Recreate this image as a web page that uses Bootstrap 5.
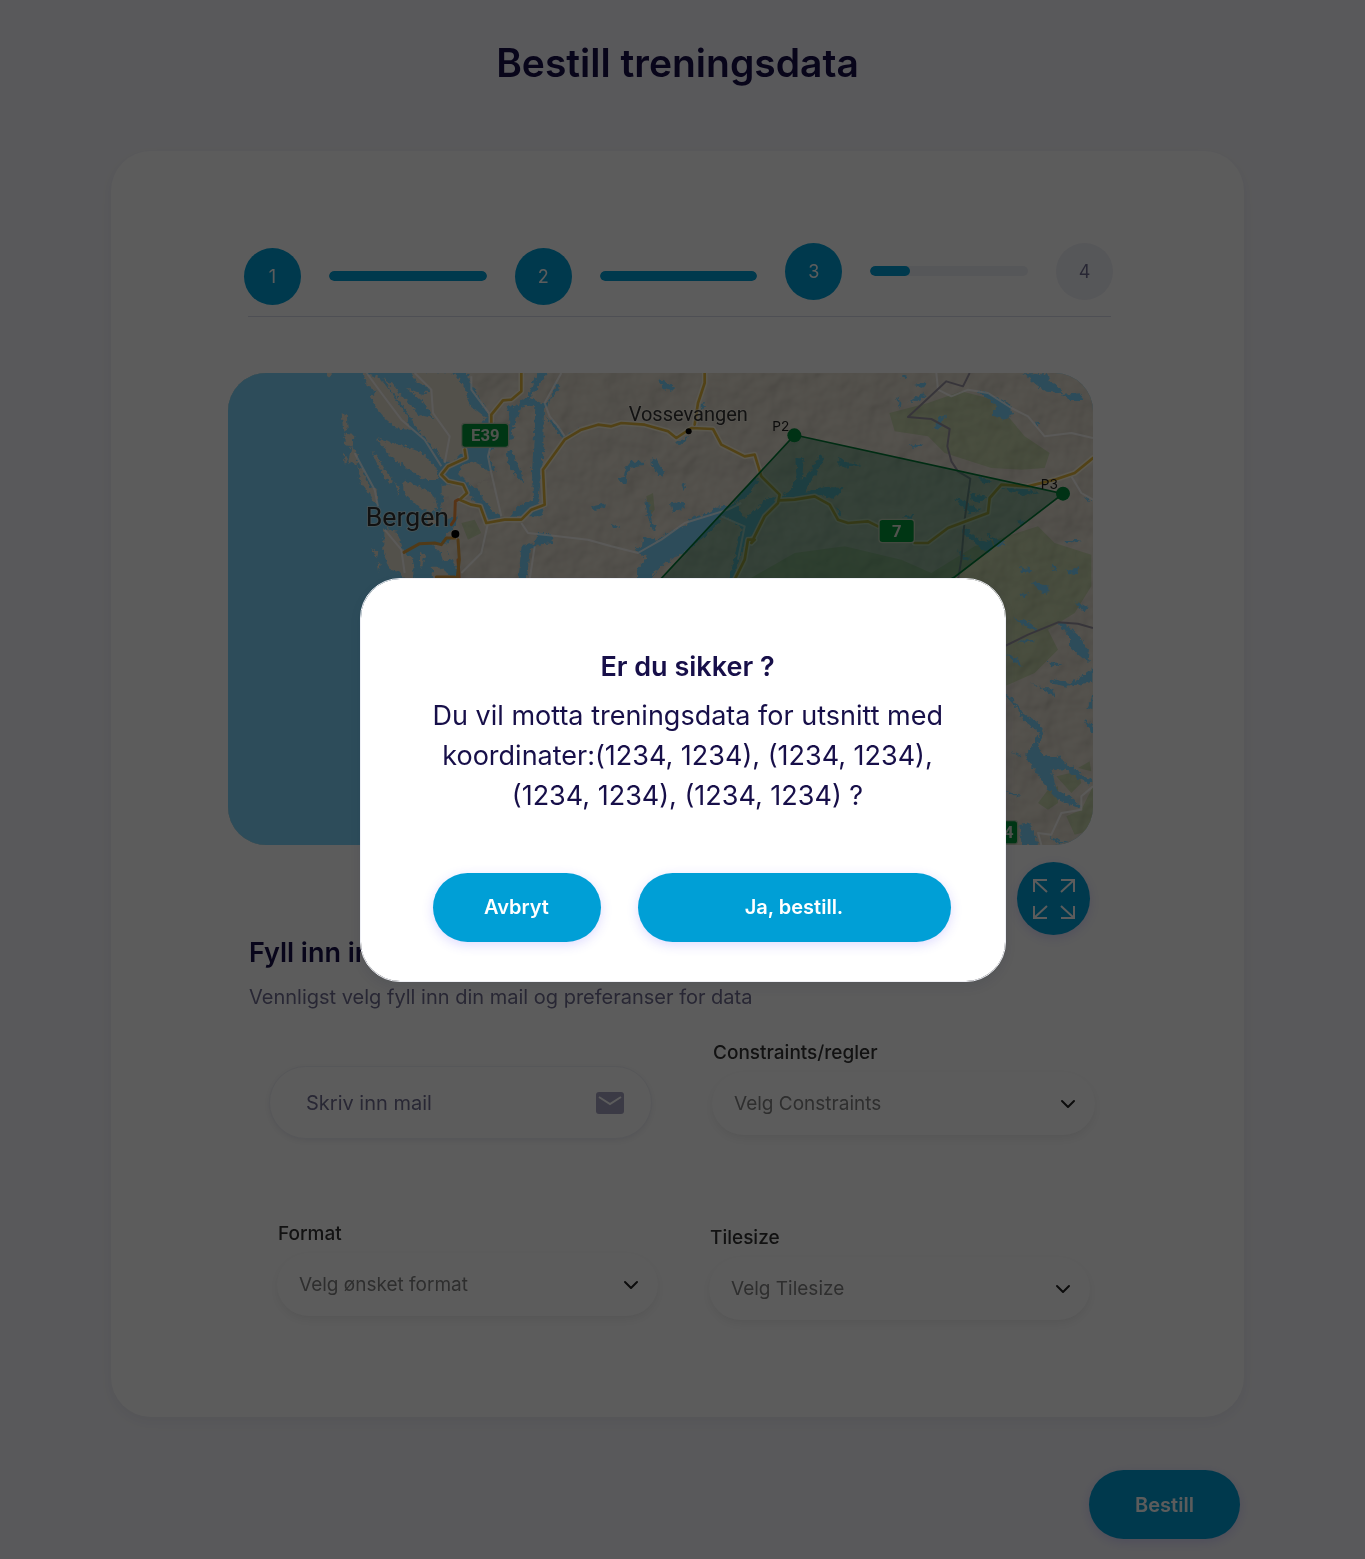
<!DOCTYPE html>
<html lang="no">
<head>
<meta charset="utf-8">
<meta name="viewport" content="width=device-width, initial-scale=1">
<title>Bestill treningsdata</title>
<link href="https://cdn.jsdelivr.net/npm/bootstrap@5.3.0/dist/css/bootstrap.min.css" rel="stylesheet">
<style>
  :root { --brand: #009fd6; --ink: #170f49; --muted-ink: #6f6c90; }
  body { background: #f7f7fc; color: var(--ink); font-family: Inter, "Open Sans", sans-serif; }
  .page-shell { padding: 39px 121px 19px 111px; }
  .page-title { font-size: 39px; line-height: 48px; font-weight: 600; margin-bottom: 64px; }
  .order-card { background: #fff; border-radius: 40px; padding: 92px 131px 97px 133px; box-shadow: 0 5px 16px rgba(8, 15, 52, .06); }
  .stepper { gap: 28px; padding-bottom: 11px; }
  .step-dot { width: 57px; height: 57px; flex: none; font-size: 18px; background: #eff0f6; color: var(--muted-ink); }
  .step-dot.is-on { background: var(--brand); color: #fff; }
  .step-bar { height: 10px; background: #eff0f6; border-radius: 40px; margin-top: 23px; }
  .step-bar .progress-bar { background: var(--brand); border-radius: 40px; }
  .step-dot.is-done { margin-top: 5px; }
  .step-bar.is-done { margin-top: 28px; }
  .step-rule { height: 1px; margin: 0 2px 56px 4px; background: #d9dbe9; }
  .map-col { margin: 0 20px 0 -16px; }
  .map-frame { border-radius: 38px; overflow: hidden; background: #7dd3f8; }
  .map-frame svg { display: block; width: 100%; height: auto; }
  .btn-brand { --bs-btn-bg: var(--brand); --bs-btn-color: #fff; --bs-btn-hover-bg: #008bbc; --bs-btn-hover-color: #fff; --bs-btn-active-bg: #007aa5; --bs-btn-active-color: #fff;
    height: 69px; font-size: 20px; font-weight: 600; border: 0; box-shadow: 0 3px 12px rgba(74, 58, 255, .18); }
  .btn-expand { width: 73px; height: 73px; margin: 17px 3px 0 0; }
  .form-title { font-size: 27px; line-height: 36px; font-weight: 600; margin: 0 0 14px 5px; }
  .form-lead { font-size: 20px; line-height: 24px; color: var(--muted-ink); margin: 0 0 32px 5px; }
  .fields-top { gap: 60px; padding-left: 25px; margin-right: 18px; margin-bottom: 83px; }
  .fields-bottom { gap: 51px; padding-left: 33px; margin-right: 23px; }
  .mail-box { height: 73px; margin-top: 25px; border: 1px solid #eff0f6; border-radius: 46px; box-shadow: 0 2px 6px rgba(19, 18, 66, .08); padding: 0 27px 0 36px; background: #fff; }
  .mail-box input { font-size: 20px; line-height: 24px; padding: 0; }
  .mail-box input::placeholder { color: var(--muted-ink); }
  .field-label { font-size: 19px; line-height: 24px; color: #333; margin: 0 0 7px 1px; font-weight: 500; }
  .pill-select { --bs-form-select-bg-img: url("data:image/svg+xml,%3csvg xmlns='http://www.w3.org/2000/svg' viewBox='0 0 16 12'%3e%3cpath fill='none' stroke='%23222' stroke-width='2' stroke-linecap='round' stroke-linejoin='round' d='M2 3l6 6 6-6'/%3e%3c/svg%3e");
    height: 63px; border: 0; border-radius: 40px; padding: 2px 48px 0 22px; font-size: 19px; color: #808080; background-position: right 19px center; box-shadow: 0 4px 10px rgba(0, 0, 0, .07); }
  .field-low { padding-top: 4px; }
  .submit-row { margin: 53px 4px 0 0; }
  .btn-submit { width: 151px; }
  .modal-backdrop { --bs-backdrop-opacity: .64; }
  .confirm-dialog { --bs-modal-width: 646px; }
  .confirm-box { border: 1px solid #eff0f6; border-radius: 40px; padding: 70px 54px 39px 72px; color: var(--ink); box-shadow: 0 5px 16px rgba(8, 15, 52, .1); }
  .confirm-copy { padding-right: 8px; }
  .confirm-title { font-size: 27px; line-height: 36px; font-weight: 600; margin-bottom: 11px; }
  .confirm-text { font-size: 27px; line-height: 40px; margin-bottom: 57px; white-space: nowrap; }
  .confirm-actions { gap: 37px; }
  .btn-cancel { width: 168px; }
</style>
</head>
<body>
<main class="page-shell">
  <h1 class="page-title text-center">Bestill treningsdata</h1>

  <section class="order-card">
    <div class="stepper d-flex align-items-start">
      <div class="step-dot is-on is-done rounded-circle d-flex align-items-center justify-content-center">1</div>
      <div class="step-bar is-done progress flex-fill"><div class="progress-bar w-100"></div></div>
      <div class="step-dot is-on is-done rounded-circle d-flex align-items-center justify-content-center">2</div>
      <div class="step-bar is-done progress flex-fill"><div class="progress-bar w-100"></div></div>
      <div class="step-dot is-on rounded-circle d-flex align-items-center justify-content-center">3</div>
      <div class="step-bar progress flex-fill"><div class="progress-bar w-25"></div></div>
      <div class="step-dot rounded-circle d-flex align-items-center justify-content-center">4</div>
    </div>
    <div class="step-rule"></div>

    <div class="map-col">
      <div class="map-frame">
        <svg viewBox="0 0 2595 1416" role="img" aria-label="Kart over Bergen og Vossevangen">
          <defs>
            <filter id="coast" x="-5%" y="-5%" width="110%" height="110%">
              <feTurbulence type="fractalNoise" baseFrequency=".09" numOctaves="2" seed="4"/>
              <feDisplacementMap in="SourceGraphic" scale="18" xChannelSelector="R" yChannelSelector="G"/>
            </filter>
            <filter id="relief" x="0" y="0" width="100%" height="100%">
              <feTurbulence type="fractalNoise" baseFrequency=".011" numOctaves="3" seed="8" result="n"/>
              <feDiffuseLighting in="n" surfaceScale="14" lighting-color="#fff"><feDistantLight azimuth="225" elevation="55"/></feDiffuseLighting>
            </filter>
          </defs>
          <rect width="2595" height="1416" fill="#ece5d7"/>

          <!-- parks and uplands -->
          <g fill="#cddab0">
            <path d="M1984 120L2100 90 2200 55 2300 80 2340 130 2390 190 2465 240 2450 285 2380 290 2290 285 2150 240 2100 190 2000 175z"/>
            <path d="M1560 620L1700 540 1850 520 2020 560 2110 600 2240 520 2430 460 2480 510 2590 545 2590 640 2540 720 2460 770 2490 830 2420 900 2330 940 2200 900 1700 800z"/>
            <path d="M2430 1290L2460 1250 2490 1240 2490 1290 2460 1310zM2485 1210L2550 1195 2560 1230 2530 1260zM2515 1330L2560 1310 2595 1240V1370L2540 1385zM2550 1185L2585 1165 2590 1195zM700 450L740 440 760 480 720 500zM1255 370L1275 360 1280 410 1265 430z"/>
          </g>
          <rect width="2595" height="1416" filter="url(#relief)" style="mix-blend-mode:multiply" opacity=".4"/>

          <!-- western sea with its fjord arms -->
          <g fill="#7dd3f8" filter="url(#coast)">
            <path d="M-20 -20H705L745 60 790 140 850 180 860 195 800 225 780 245 800 290 760 295 740 270 705 275 690 300 720 330 780 370 790 400 825 440 780 440 735 380 700 355 660 340 640 400 650 440 690 430 680 460 650 490 670 500 650 530 690 590 680 640H500L470 1440H-20z"/>
            <path d="M836 95L860 100 900 70 920 20 940 -10 965 -10 930 40 905 75 940 90 962 90 985 30 995 40 960 98 945 112 905 95 880 105 862 140 850 185 838 185 845 140z"/>
            <path d="M832 240L850 230 880 300 885 330 850 290zM922 100L948 100 945 260 930 390 950 400 940 430 880 430 840 440 870 400 915 380 912 300zM950 130L980 150 1010 190 1000 195 970 150z"/>
            <path d="M930 480L970 480 975 510 930 515 905 530 895 640 870 640 880 520 920 510z"/>
          </g>
          <!-- islands -->
          <g transform="translate(-24 -24)" fill="#e6dfd1" filter="url(#coast)">
            <path d="M310 24L325 36 340 24zM365 145L380 150 383 190 370 200zM372 205L400 210 398 245 375 240zM395 245L410 265 412 300 385 290zM415 300L430 320 450 365 470 375 472 420 460 410 440 375 420 345z"/>
            <path d="M430 22L480 40 520 90 560 150 570 195 530 190 500 165 470 130 450 95 470 80 440 60z"/>
            <path d="M490 40L520 60 560 110 600 150 640 210 660 260 640 250 600 200 560 140z"/>
            <path d="M570 22L700 22 730 60 750 120 800 160 770 180 730 180 730 260 700 290 670 290 640 240 600 150 640 160 610 110 560 70 610 90 630 70 590 50z"/>
            <path d="M470 220L500 230 540 240 600 260 650 310 655 345 620 345 560 310 530 290 500 260z"/>
            <path d="M550 345L600 365 640 390 655 430 630 440 600 430 560 390 550 375z"/>
            <path d="M665 360L720 355 745 385 730 400 700 405 665 390z"/>
            <path d="M725 300L770 290 810 330 790 350 720 330zM770 355L800 350 840 410 850 450 820 440 790 405z"/>
            <path d="M455 260L470 275 500 320 520 350 510 355 480 315zM490 490L530 500 550 560 580 580 580 640 560 660 540 620 510 615 490 560z"/>
            <path d="M600 560L615 570 605 610 600 590zM640 540L690 530 680 560 700 580 670 590 660 560zM635 605L660 605 700 640 640 645zM455 550L475 560 470 580zM470 590L482 600 475 620zM620 440L650 470 625 490zM370 265L385 280 375 300zM425 340L435 365 422 360zM525 350L540 370 535 390z"/>
          </g>
          <!-- inner fjords and lakes -->
          <g transform="translate(816 -24)" fill="#7dd3f8" filter="url(#coast)">
            <path d="M408 545L425 550 430 515 470 525 520 495 560 480 570 460 620 445 650 425 705 420 670 455 640 490 610 520 560 560 520 580 470 615 450 645H410L412 610 440 580 410 560z"/>
            <path d="M665 450L700 415 760 340 778 345 738 400 708 412 735 458 775 430 790 405 832 392 822 420 790 452 770 500 742 522 712 600 702 645H688L698 600 712 540 725 492 700 470z"/>
            <path d="M835 400L870 380 890 340 886 280 912 280 905 345 930 320 962 268 972 282 915 380 980 365 1030 370 1000 402 960 390 900 403z"/>
            <path d="M478 42L495 50 525 70 515 78 485 70zM350 340L372 335 375 310 390 290 435 290 430 300 395 305 382 330 380 360zM455 280L470 285 492 325 485 340 455 300zM272 425L318 415 315 425 285 435zM435 405L450 420 455 470 468 490 458 495 442 450zM510 415L550 410 555 430 520 440zM545 360L560 355 550 378zM335 475L358 485 345 495zM190 215L240 190 235 200 200 220zM525 235L565 215 545 240zM600 115L615 110 605 140z"/>
          </g>
          <g transform="translate(1686 -24)" fill="#7dd3f8" filter="url(#coast)">
            <path d="M555 75L600 85 660 120 670 150 640 165 605 150 620 120zM700 25L740 60 770 80 820 85 800 60 780 50 770 25zM815 90L870 85 880 105 840 105zM430 190L450 155 468 152 445 198zM320 95L335 115 330 130zM355 110L400 85 410 95 370 110zM332 35L352 25 345 42zM375 60L410 50 405 68zM355 240L400 235 375 252zM145 275L165 290 215 300 170 308 145 300z"/>
            <path d="M495 400L520 405 540 420 575 435 540 445 520 430zM540 385L590 395 570 415 545 405zM520 485L560 520 600 530 610 550 590 565 550 530 520 510zM590 505L650 540 620 545zM630 370L700 370 750 385 700 390zM560 335L610 350 580 355zM500 550L520 575 550 580 520 585zM685 465L708 470 690 480zM820 525L880 525 830 535zM690 605L730 615 695 622zM785 595L805 615 790 618zM825 620L870 605 860 625zM730 650L775 665 745 672zM880 395L910 410 890 405zM335 455L370 450 365 465zM140 420L152 450 145 455zM735 165L745 180 738 182z"/>
          </g>
          <g transform="translate(2286 591)" fill="#7dd3f8" filter="url(#coast)">
            <path d="M90 0L130 0 110 8zM225 0L265 0 250 12zM125 35L175 50 175 72 150 65zM85 72L115 68 105 82zM255 95L300 112 275 122zM70 145L120 155 145 185 110 172zM200 155L222 160 270 200 298 250 295 280 260 250 240 230 240 200zM80 220L110 206 138 213zM45 250L80 265 98 290 85 285zM175 275L215 280 185 290zM178 325L240 340 290 310 310 295V335L230 350 185 340zM120 335L160 355 185 355 193 380 170 365z"/>
            <path d="M40 370L65 385 100 430 150 460 162 490 145 520 150 545 180 565 210 555 225 580 260 600 280 620 310 630 300 642 255 620 225 598 185 600 200 660 240 680 270 705 272 718 200 685 160 640 135 600 105 560 125 530 150 490 100 450 85 420zM58 540L98 560 90 562zM40 660L98 678 70 675zM88 765L120 760 145 825H95zM178 800L235 820 200 820zM310 370V420L292 415zM285 450L310 465V495z"/>
          </g>

          <!-- minor roads and county borders -->
          <g fill="none" stroke="#fff" stroke-width="6" stroke-linejoin="round" opacity=".75">
            <path d="M416 0L460 60 520 140 590 200 640 280M560 0L610 50 615 120 665 190 650 270M795 190L780 250 790 300 820 430 M380 240L440 350 450 400M470 470L520 530 530 600M780 450L760 540 700 600M730 10L730 50 790 130"/>
            <path d="M1000 0L950 90 965 130 990 160 1010 190M880 450L900 480 990 490 1080 500 1150 520 1230 540 1300 500 1370 450 1500 410 1540 390M920 520L905 620M1480 430L1550 460 1530 560M2125 0L2130 50 2170 70 2220 50 2280 60 2350 105 2400 130 2450 190 2530 180 2595 195M2530 310L2560 360 2595 380"/>
            <path d="M2440 1416L2430 1380 2470 1385 2500 1320 2560 1310 2560 1270 2595 1240"/>
          </g>
          <g fill="none" stroke="#9a94a2" stroke-width="6" stroke-linejoin="round">
            <path d="M2225 0L2205 40 2155 25 2040 132 2110 138 2165 168 2158 220 2170 265 2190 295 2227 317 2210 440 2200 560 2190 620"/>
            <path d="M2300 834L2400 785 2490 748 2550 752 2595 765"/>
          </g>

          <!-- main roads -->
          <g fill="none" stroke-linejoin="round" stroke-linecap="round">
            <g stroke="#faf3dc" stroke-width="17">
              <path id="r1" d="M880 0V55L850 80 825 82 790 125 790 170M710 230L714 255 660 280 640 305 660 325 705 335 717 360 695 380 730 395 757 400 775 450 830 440 880 440 910 410 950 395 945 290 1010 200 1060 170 1110 155 1150 160 1180 150 1250 155 1320 175 1345 195 1390 165 1455 168 1480 215 1550 250 1580 245 1600 310 1655 365 1650 390 1610 430 1580 490 1570 510 1580 500 1560 500 1550 560 1520 620M1430 0L1430 30 1410 90 1400 155M1655 382L1700 380 1760 370 1805 395 1830 440 1860 450 1920 445 1950 460M2060 510L2100 510 2160 465 2240 435 2280 420 2285 375 2320 335 2400 340 2480 320 2540 300 2595 255"/>
            </g>
            <use href="#r1" stroke="#e3b73d" stroke-width="8"/>
            <path d="M690 380L682 385 680 440 670 455M700 640L695 640 690 560" stroke="#f2913f" stroke-width="9"/>
            <path d="M528 538L575 512 620 510 640 515 655 495 680 495M625 612L680 612M690 500L694 560 688 612" stroke="#e0a040" stroke-width="9"/>
          </g>

          <!-- selected area -->
          <path d="M1700 186L2505 362 2180 612 1300 1050 1180 745z" fill="#00693e" fill-opacity=".36" stroke="#007a35" stroke-width="5"/>
          <circle cx="1699" cy="187" r="21" fill="#008a3c"/>
          <circle cx="2505" cy="362" r="21" fill="#008a3c"/>

          <!-- road shields -->
          <g fill="#009639" stroke="#b9c9b0" stroke-width="4">
            <rect x="701" y="151" width="141" height="72" rx="10"/>
            <rect x="1953" y="439" width="106" height="70" rx="10"/>
            <rect x="2260" y="1343" width="109" height="70" rx="10"/>
          </g>
          <g font-family="Roboto, sans-serif" font-weight="700" font-size="50" fill="#dfe5d8" text-anchor="middle">
            <text x="772" y="205">E39</text>
            <text x="2006" y="492">7</text>
            <text x="2314" y="1396">134</text>
          </g>
          <g font-family="Roboto, sans-serif" fill="#333" stroke="#f4efe2" stroke-opacity=".6" stroke-width="5" paint-order="stroke">
            <text x="413" y="460" font-size="80">Bergen</text>
            <text x="1202" y="144" font-size="60">Vossevangen</text>
          </g>
          <g font-family="Inter, sans-serif" font-size="41" fill="#222">
            <text x="1633" y="173">P2</text>
            <text x="2438" y="349">P3</text>
          </g>
          <circle cx="682" cy="483" r="12"/>
          <circle cx="1382" cy="175" r="9"/>
        </svg>
      </div>
      <div class="d-flex justify-content-end">
        <button type="button" class="btn btn-brand btn-expand rounded-circle p-0 d-flex align-items-center justify-content-center" aria-label="Utvid kart">
          <svg width="42" height="42" viewBox="0 0 42 42" fill="none" stroke="#fff" stroke-width="2">
            <path d="M1 14V2H14M1 2L14 14M28 2H41V14M41 2L28 14M1 28V40H14M1 40L14 28M28 40H41V28M41 40L28 28"/>
          </svg>
        </button>
      </div>
    </div>

    <form>
      <h2 class="form-title">Fyll inn informasjon</h2>
      <p class="form-lead">Vennligst velg fyll inn din mail og preferanser for data</p>

      <div class="fields-top d-flex align-items-start">
        <div class="flex-fill w-50">
          <div class="mail-box d-flex align-items-center">
            <input id="mail" type="email" class="form-control border-0 bg-transparent shadow-none" placeholder="Skriv inn mail" aria-label="Skriv inn mail">
            <svg width="28" height="22" viewBox="0 0 28 22" class="flex-shrink-0">
              <rect width="28" height="22" rx="3" fill="#a3a0bf"/>
              <path d="M3 5l11 7 11-7" fill="none" stroke="#fff" stroke-width="2"/>
            </svg>
          </div>
        </div>
        <div class="flex-fill w-50">
          <label for="constraints" class="field-label d-block">Constraints/regler</label>
          <select id="constraints" class="form-select pill-select"><option>Velg Constraints</option></select>
        </div>
      </div>

      <div class="fields-bottom d-flex align-items-start">
        <div class="flex-fill w-50">
          <label for="format" class="field-label d-block">Format</label>
          <select id="format" class="form-select pill-select"><option>Velg ønsket format</option></select>
        </div>
        <div class="field-low flex-fill w-50">
          <label for="tilesize" class="field-label d-block">Tilesize</label>
          <select id="tilesize" class="form-select pill-select"><option>Velg Tilesize</option></select>
        </div>
      </div>
    </form>
  </section>

  <div class="submit-row d-flex justify-content-end">
    <button type="button" class="btn btn-brand btn-submit rounded-pill">Bestill</button>
  </div>
</main>

<div class="modal-backdrop show"></div>
<div class="modal d-block" tabindex="-1" role="dialog" aria-modal="true" aria-labelledby="confirm-title">
  <div class="modal-dialog modal-dialog-centered confirm-dialog">
    <div class="modal-content confirm-box">
      <div class="confirm-copy text-center">
        <h2 id="confirm-title" class="confirm-title">Er du sikker ?</h2>
        <p class="confirm-text">Du vil motta treningsdata for utsnitt med<br>koordinater:(1234, 1234), (1234, 1234),<br>(1234, 1234), (1234, 1234) ?</p>
      </div>
      <div class="confirm-actions d-flex">
        <button type="button" class="btn btn-brand btn-cancel rounded-pill">Avbryt</button>
        <button type="button" class="btn btn-brand rounded-pill flex-fill">Ja, bestill.</button>
      </div>
    </div>
  </div>
</div>
<script src="https://cdn.jsdelivr.net/npm/bootstrap@5.3.0/dist/js/bootstrap.bundle.min.js"></script>
</body>
</html>
